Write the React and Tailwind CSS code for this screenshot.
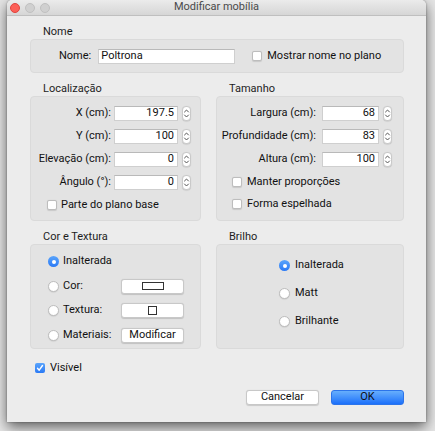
import React from "react";

const font = { fontFamily: '"Roboto", "Liberation Sans", sans-serif' };

function Spinner() {
  return (
    <div className="w-[9px] h-[15px] rounded-[4px] bg-white border border-[#c9c9c9] shadow-[0_0.5px_1px_rgba(0,0,0,0.15)] flex items-center justify-center">
      <svg width="7" height="11" viewBox="0 0 7 11" fill="none" stroke="#555" strokeWidth="1" strokeLinecap="round" strokeLinejoin="round">
        <path d="M1.5 4 L3.5 2 L5.5 4" />
        <path d="M1.5 7 L3.5 9 L5.5 7" />
      </svg>
    </div>
  );
}

function Checkbox({ checked }) {
  if (checked) {
    return (
      <div className="w-[10px] h-[10px] rounded-[2px] bg-gradient-to-b from-[#5aa4fb] to-[#2a79f5] flex items-center justify-center">
        <svg width="8" height="8" viewBox="0 0 8 8" fill="none" stroke="#fff" strokeWidth="1.4" strokeLinecap="round" strokeLinejoin="round">
          <path d="M1.5 4.3 L3.2 6.2 L6.5 1.5" />
        </svg>
      </div>
    );
  }
  return <div className="w-[10px] h-[10px] rounded-[2px] bg-white border border-[#bdbdbd] shadow-[0_0.5px_1px_rgba(0,0,0,0.12)]" />;
}

function Radio({ checked }) {
  if (checked) {
    return (
      <div className="w-[11px] h-[11px] rounded-full bg-gradient-to-b from-[#5aa4fb] to-[#2a79f5] flex items-center justify-center">
        <div className="w-[4px] h-[4px] rounded-full bg-white" />
      </div>
    );
  }
  return <div className="w-[11px] h-[11px] rounded-full bg-white border border-[#bdbdbd] shadow-[0_0.5px_1px_rgba(0,0,0,0.12)]" />;
}

function NumField({ value, w }) {
  return (
    <div className={`${w} h-[15px] bg-white border border-[#cfcfcf] border-t-[#b9b9b9] flex items-center justify-end pr-[3px] text-[11px] text-[#111]`}>
      {value}
    </div>
  );
}

function GroupLabel({ children }) {
  return <div className="h-[14px] leading-[14px] pl-[13px] text-[11px] text-[#1d1d1d]">{children}</div>;
}

function Box({ className, children }) {
  return <div className={`bg-[#e3e3e3] border border-[#dadada] rounded-[4px] ${className}`}>{children}</div>;
}

function PushButton({ children, className = "" }) {
  return (
    <div className={`h-[15px] bg-white rounded-[3px] border border-[#c8c8c8] shadow-[0_0.5px_1px_rgba(0,0,0,0.15)] flex items-center justify-center text-[11px] text-[#111] ${className}`}>
      {children}
    </div>
  );
}

export default function App() {
  const locRows = [
    ["X (cm):", "197.5"],
    ["Y (cm):", "100"],
    ["Elevação (cm):", "0"],
    ["Ângulo (°):", "0"],
  ];
  const sizeRows = [
    ["Largura (cm):", "68"],
    ["Profundidade (cm):", "83"],
    ["Altura (cm):", "100"],
  ];
  return (
    <div className="w-[435px] h-[431px] bg-[#e6e6e6] overflow-hidden" style={font}>
      <div className="ml-[7px] w-[419px] h-[422px] bg-[#ececec] rounded-t-[5px] shadow-[0_5px_14px_rgba(0,0,0,0.6),0_0_2px_rgba(0,0,0,0.4)] flex flex-col">
        {/* title bar */}
        <div className="h-[16px] rounded-t-[5px] bg-gradient-to-b from-[#ebebeb] to-[#d6d6d6] border-b border-[#bfbfbf] flex items-center relative">
          <div className="flex gap-[5px] pl-[3px]">
            <div className="w-[10px] h-[10px] rounded-full bg-[#fc5f57] border border-[#e0443e]" />
            <div className="w-[10px] h-[10px] rounded-full bg-[#d0d0d0] border border-[#c0c0c0]" />
            <div className="w-[10px] h-[10px] rounded-full bg-[#d0d0d0] border border-[#c0c0c0]" />
          </div>
          <div className="absolute inset-0 flex items-center justify-center text-[11px] text-[#4a4a4a]">Modificar mobília</div>
        </div>

        <div className="pl-[23px] pr-[22px] pt-[9px] flex flex-col">
          {/* Nome */}
          <GroupLabel>Nome</GroupLabel>
          <Box className="h-[34px] flex items-center pl-[28px]">
            <span className="text-[11px] text-[#111]">Nome:</span>
            <div className="ml-[7px] w-[137px] h-[15px] bg-white border border-[#cfcfcf] border-t-[#b9b9b9] flex items-center pl-[2px] text-[11px] text-[#111]">
              Poltrona
            </div>
            <div className="ml-[17px]"><Checkbox /></div>
            <span className="ml-[5px] text-[11px] text-[#111]">Mostrar nome no plano</span>
          </Box>

          {/* Localização / Tamanho */}
          <div className="mt-[9px] flex gap-[15px]">
            <div className="w-[171px] flex flex-col">
              <GroupLabel>Localização</GroupLabel>
              <Box className="h-[125px] pt-[9px] flex flex-col">
                <div className="flex flex-col gap-[8px]">
                  {locRows.map(([l, v]) => (
                    <div key={l} className="flex items-center h-[15px]">
                      <span className="w-[80px] text-right text-[11px] text-[#111] whitespace-nowrap">{l}</span>
                      <div className="ml-[3px]"><NumField value={v} w="w-[64px]" /></div>
                      <div className="ml-[4px]"><Spinner /></div>
                    </div>
                  ))}
                </div>
                <div className="mt-[8px] h-[14px] flex items-center pl-[16px]">
                  <Checkbox />
                  <span className="ml-[4px] text-[11px] text-[#111]">Parte do plano base</span>
                </div>
              </Box>
            </div>
            <div className="w-[188px] flex flex-col">
              <GroupLabel>Tamanho</GroupLabel>
              <Box className="h-[125px] pt-[9px] flex flex-col">
                <div className="flex flex-col gap-[8px]">
                  {sizeRows.map(([l, v]) => (
                    <div key={l} className="flex items-center h-[15px]">
                      <span className="w-[99px] text-right text-[11px] text-[#111] whitespace-nowrap">{l}</span>
                      <div className="ml-[6px]"><NumField value={v} w="w-[57px]" /></div>
                      <div className="ml-[4px]"><Spinner /></div>
                    </div>
                  ))}
                </div>
                <div className="mt-[8px] flex flex-col gap-[8px] pl-[15px]">
                  <div className="h-[14px] flex items-center">
                    <Checkbox />
                    <span className="ml-[5px] text-[11px] text-[#111]">Manter proporções</span>
                  </div>
                  <div className="h-[14px] flex items-center">
                    <Checkbox />
                    <span className="ml-[5px] text-[11px] text-[#111]">Forma espelhada</span>
                  </div>
                </div>
              </Box>
            </div>
          </div>

          {/* Cor e Textura / Brilho */}
          <div className="mt-[9px] flex gap-[15px]">
            <div className="w-[171px] flex flex-col">
              <GroupLabel>Cor e Textura</GroupLabel>
              <Box className="h-[105px] pt-[9px] pl-[17px] flex flex-col gap-[9.5px]">
                <div className="h-[15px] flex items-center">
                  <Radio checked />
                  <span className="ml-[4px] text-[11px] text-[#111]">Inalterada</span>
                </div>
                <div className="h-[15px] flex items-center">
                  <Radio />
                  <span className="ml-[4px] w-[58px] text-[11px] text-[#111]">Cor:</span>
                  <PushButton className="w-[63px]">
                    <div className="w-[22px] h-[8px] border border-[#333] bg-white" />
                  </PushButton>
                </div>
                <div className="h-[15px] flex items-center">
                  <Radio />
                  <span className="ml-[4px] w-[58px] text-[11px] text-[#111]">Textura:</span>
                  <PushButton className="w-[63px]">
                    <div className="w-[9px] h-[9px] border border-[#333] bg-white" />
                  </PushButton>
                </div>
                <div className="h-[15px] flex items-center">
                  <Radio />
                  <span className="ml-[4px] w-[58px] text-[11px] text-[#111]">Materiais:</span>
                  <PushButton className="w-[63px]">Modificar</PushButton>
                </div>
              </Box>
            </div>
            <div className="w-[188px] flex flex-col">
              <GroupLabel>Brilho</GroupLabel>
              <Box className="h-[105px] pt-[13px] pl-[62px] flex flex-col gap-[13px]">
                <div className="h-[15px] flex items-center">
                  <Radio checked />
                  <span className="ml-[5px] text-[11px] text-[#111]">Inalterada</span>
                </div>
                <div className="h-[15px] flex items-center">
                  <Radio />
                  <span className="ml-[5px] text-[11px] text-[#111]">Matt</span>
                </div>
                <div className="h-[15px] flex items-center">
                  <Radio />
                  <span className="ml-[5px] text-[11px] text-[#111]">Brilhante</span>
                </div>
              </Box>
            </div>
          </div>

          {/* Visível */}
          <div className="mt-[12px] h-[14px] flex items-center pl-[5px]">
            <Checkbox checked />
            <span className="ml-[5px] text-[11px] text-[#111]">Visível</span>
          </div>

          {/* Buttons */}
          <div className="mt-[15px] flex justify-end gap-[12px]">
            <PushButton className="w-[73px]">Cancelar</PushButton>
            <div className="w-[73px] h-[15px] rounded-[3px] bg-gradient-to-b from-[#67aefc] to-[#1b6ffa] border border-[#2c74ea] flex items-center justify-center text-[11px] text-[#111]">
              OK
            </div>
          </div>
        </div>
      </div>
    </div>
  );
}
